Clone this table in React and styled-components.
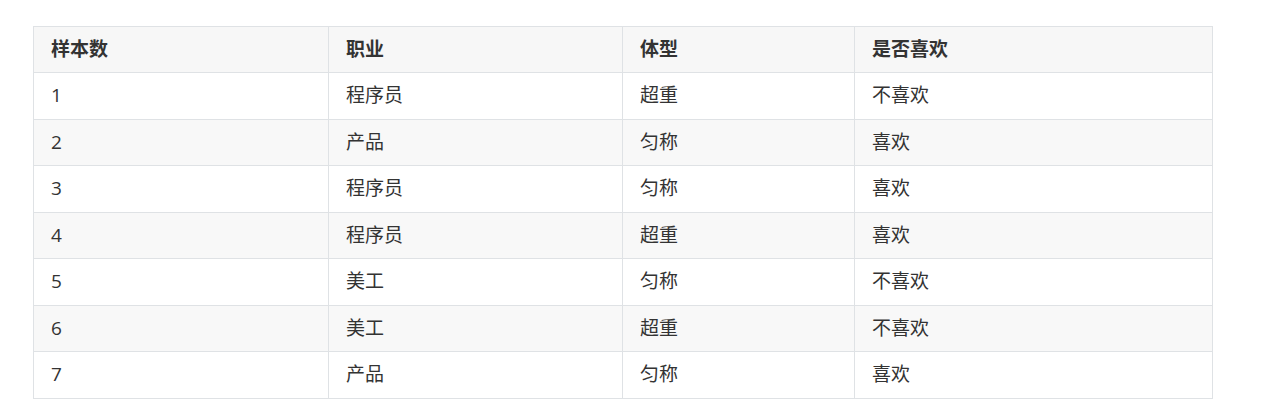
import React from 'react';
import styled, { createGlobalStyle } from 'styled-components';

const GlobalStyle = createGlobalStyle`
  html, body {
    margin: 0;
    padding: 0;
    background: #fff;
  }
  body {
    font-family: "Open Sans", "Noto Sans CJK SC", sans-serif;
    color: #333;
  }
`;

const Page = styled.div`
  padding: 26px 50px 0 33px;
`;

const Table = styled.table`
  width: 1179px;
  border-collapse: collapse;
  table-layout: fixed;
  font-size: 19px;
`;

const Th = styled.th`
  text-align: left;
  font-weight: 600;
  height: 46px;
  padding: 0 17px;
  border: 1px solid #dfe2e5;
  background: #f7f7f7;
  box-sizing: border-box;
  line-height: 1.2;
`;

const Row = styled.tr`
  background: ${p => (p.$striped ? '#f8f8f8' : '#fff')};
`;

const Td = styled.td`
  height: 46.5px;
  padding: 0 17px;
  border: 1px solid #dfe2e5;
  box-sizing: border-box;
  line-height: 1.2;
`;

const columns = [
  { title: '样本数', width: 295 },
  { title: '职业', width: 294 },
  { title: '体型', width: 232 },
  { title: '是否喜欢', width: 358 },
];

const rows = [
  ['1', '程序员', '超重', '不喜欢'],
  ['2', '产品', '匀称', '喜欢'],
  ['3', '程序员', '匀称', '喜欢'],
  ['4', '程序员', '超重', '喜欢'],
  ['5', '美工', '匀称', '不喜欢'],
  ['6', '美工', '超重', '不喜欢'],
  ['7', '产品', '匀称', '喜欢'],
];

export default function App() {
  return (
    <>
      <GlobalStyle />
      <Page>
        <Table>
          <colgroup>
            {columns.map(c => (
              <col key={c.title} style={{ width: c.width }} />
            ))}
          </colgroup>
          <thead>
            <tr>
              {columns.map(c => (
                <Th key={c.title}>{c.title}</Th>
              ))}
            </tr>
          </thead>
          <tbody>
            {rows.map((r, i) => (
              <Row key={i} $striped={i % 2 === 1}>
                {r.map((cell, j) => (
                  <Td key={j}>{cell}</Td>
                ))}
              </Row>
            ))}
          </tbody>
        </Table>
      </Page>
    </>
  );
}
